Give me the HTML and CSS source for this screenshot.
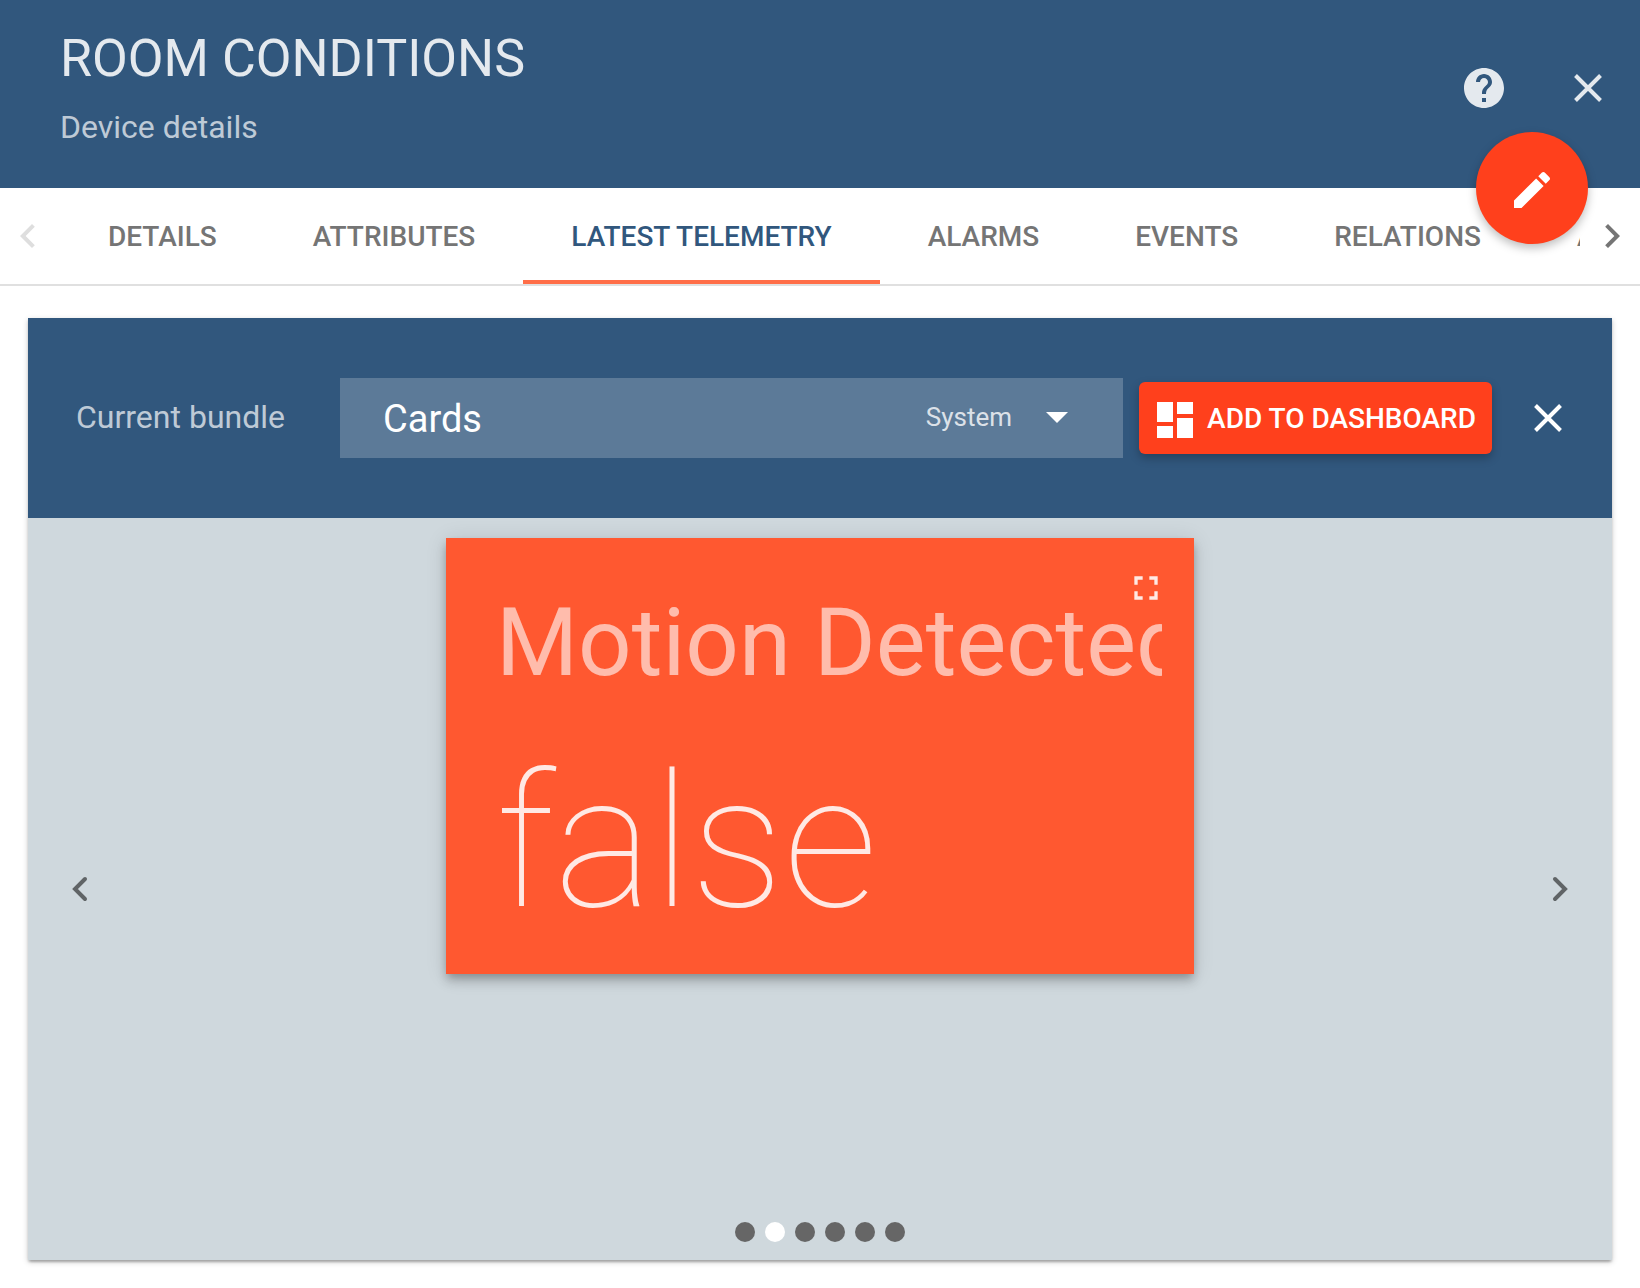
FILE: index.html
```html
<!DOCTYPE html>
<html lang="en">
<head>
<meta charset="utf-8">
<title>Room Conditions - Device details</title>
<link rel="stylesheet" href="styles.css">
</head>
<body>
<header class="header">
  <div class="header-titles">
    <h1 class="title">ROOM CONDITIONS</h1>
    <p class="subtitle">Device details</p>
  </div>
  <div class="header-actions">
    <button class="icon-button" type="button" aria-label="Help">
      <svg class="icon" viewBox="0 0 24 24"><path d="M12 2C6.480 2 2 6.480 2 12s4.480 10 10 10 10-4.480 10-10S17.520 2 12 2zm1 17h-2v-2h2v2zm2.070-7.750l-.9.920C13.450 12.900 13 13.500 13 15h-2v-.5c0-1.100.450-2.100 1.170-2.830l1.240-1.260c.370-.360.590-.860.590-1.410 0-1.100-.9-2-2-2s-2 .9-2 2H8c0-2.210 1.790-4 4-4s4 1.790 4 4c0 .880-.360 1.680-.930 2.250z"/></svg>
    </button>
    <button class="icon-button" type="button" aria-label="Close details">
      <svg class="icon icon-line" viewBox="0 0 48 48"><path d="M11.500 11.500L36.500 36.500M36.500 11.500L11.500 36.500"/></svg>
    </button>
  </div>
  <button class="fab" type="button" aria-label="Edit device">
    <svg class="icon" viewBox="0 0 24 24"><path d="M3 17.250V21h3.750L17.810 9.940l-3.750-3.750L3 17.250zM20.710 7.040c.390-.390.390-1.020 0-1.410l-2.340-2.340c-.390-.390-1.020-.390-1.410 0l-1.830 1.830 3.750 3.750 1.830-1.830z"/></svg>
  </button>
</header>

<nav class="tab-bar">
  <button class="tab-scroll tab-scroll-prev" type="button" aria-label="Previous tabs" disabled>
    <svg class="icon" viewBox="0 0 24 24"><path d="M15.410 7.410L14 6l-6 6 6 6 1.410-1.410L10.830 12z"/></svg>
  </button>
  <div class="tabs" role="tablist">
    <button class="tab" type="button" role="tab">DETAILS</button>
    <button class="tab" type="button" role="tab">ATTRIBUTES</button>
    <button class="tab tab-active" type="button" role="tab" aria-selected="true">LATEST TELEMETRY</button>
    <button class="tab" type="button" role="tab">ALARMS</button>
    <button class="tab" type="button" role="tab">EVENTS</button>
    <button class="tab" type="button" role="tab">RELATIONS</button>
    <button class="tab" type="button" role="tab">AUDIT LOGS</button>
  </div>
  <button class="tab-scroll tab-scroll-next" type="button" aria-label="Next tabs">
    <svg class="icon" viewBox="0 0 24 24"><path d="M10 6L8.590 7.410 13.170 12l-4.580 4.590L10 18l6-6z"/></svg>
  </button>
</nav>

<main class="content">
  <section class="panel">
    <div class="toolbar">
      <label class="bundle-label" for="bundle">Current bundle</label>
      <div class="bundle">
        <select class="bundle-select" id="bundle"><option>Cards</option></select>
        <span class="bundle-info">
          <span class="bundle-scope">System</span>
          <svg class="bundle-arrow" viewBox="0 0 22 11"><path d="M0 0h22L11 11z"/></svg>
        </span>
      </div>
      <button class="add-button" type="button">
        <svg class="icon add-icon" viewBox="0 0 24 24"><path d="M3 13h8V3H3v10zm0 8h8v-6H3v6zm10 0h8V11h-8v10zm0-18v6h8V3h-8z"/></svg>
        ADD TO DASHBOARD
      </button>
      <button class="icon-button toolbar-close" type="button" aria-label="Close widgets">
        <svg class="icon icon-line" viewBox="0 0 48 48"><path d="M11.500 11.500L36.500 36.500M36.500 11.500L11.500 36.500"/></svg>
      </button>
    </div>

    <div class="carousel">
      <button class="carousel-arrow" type="button" aria-label="Previous widget">
        <svg class="icon icon-chevron" viewBox="0 0 48 48"><path d="M29 14L19 24L29 34"/></svg>
      </button>
      <article class="card">
        <h2 class="card-label">Motion Detected</h2>
        <p class="card-value">false</p>
        <button class="card-expand" type="button" aria-label="Full screen">
          <svg class="icon-small" viewBox="0 0 24 24"><path d="M7 14H5v5h5v-2H7v-3zm-2-4h2V7h3V5H5v5zm12 7h-3v2h5v-5h-2v3zM14 5v2h3v3h2V5h-5z"/></svg>
        </button>
      </article>
      <button class="carousel-arrow" type="button" aria-label="Next widget">
        <svg class="icon icon-chevron" viewBox="0 0 48 48"><path d="M19 14L29 24L19 34"/></svg>
      </button>
      <div class="dots">
        <button class="dot" type="button" aria-label="Slide 1"></button>
        <button class="dot dot-active" type="button" aria-label="Slide 2"></button>
        <button class="dot" type="button" aria-label="Slide 3"></button>
        <button class="dot" type="button" aria-label="Slide 4"></button>
        <button class="dot" type="button" aria-label="Slide 5"></button>
        <button class="dot" type="button" aria-label="Slide 6"></button>
      </div>
    </div>
  </section>
</main>
</body>
</html>
```
FILE: styles.css
```css
:root {
  --primary: #31577d;
  --accent: #ff401c;
}

* { box-sizing: border-box; }

body {
  margin: 0;
  min-height: 100vh;
  display: flex;
  flex-direction: column;
  background: #fff;
  font-family: Roboto, "Liberation Sans", sans-serif;
}

h1, h2, p { margin: 0; font-weight: 400; }

button {
  flex: none;
  margin: 0;
  padding: 0;
  border: 0;
  background: none;
  color: inherit;
  font: inherit;
  cursor: pointer;
}

svg { display: block; fill: currentColor; }
.icon { width: 48px; height: 48px; flex: none; }
.icon-small { width: 40px; height: 40px; }
.icon-line { fill: none; stroke: currentColor; stroke-width: 4; }

/* Header */
.header {
  position: relative;
  display: flex;
  justify-content: space-between;
  height: 188px;
  padding: 28px 28px 0 60px;
  background: var(--primary);
  color: rgba(255, 255, 255, 0.87);
}

.title { font-size: 52px; line-height: 62px; }
.subtitle {
  margin-top: 18px;
  font-size: 32px;
  line-height: 38px;
  color: rgba(255, 255, 255, 0.7);
}

.header-actions { display: flex; gap: 56px; padding-top: 36px; height: 84px; }
.icon-button { width: 48px; height: 48px; }

.fab {
  position: absolute;
  right: 52px;
  bottom: -56px;
  z-index: 2;
  width: 112px;
  height: 112px;
  padding: 4px 32px 0;
  border-radius: 50%;
  background: var(--accent);
  color: #fff;
  box-shadow: 0 4px 10px rgba(0, 0, 0, 0.26);
}

/* Tabs */
.tab-bar {
  display: flex;
  height: 98px;
  border-bottom: 2px solid #e0e0e0;
  color: #757575;
}

.tab-scroll { width: 60px; }
.tab-scroll-prev { padding-left: 4px; color: #dedede; }
.tab-scroll-next { padding-left: 8px; }

.tabs { flex: 1; min-width: 0; display: flex; overflow: hidden; }
.tab {
  padding: 0 48px;
  font-size: 28px;
  font-weight: 500;
  white-space: nowrap;
}
.tab-active { color: var(--primary); box-shadow: inset 0 -4px #ff6e48; }

/* Widget panel */
.content { flex: 1; display: flex; padding: 32px 28px 28px; }

.panel {
  flex: 1;
  min-width: 0;
  display: flex;
  flex-direction: column;
  background: #cfd8dd;
  box-shadow: 0 2px 6px rgba(0, 0, 0, 0.2), 0 2px 2px rgba(0, 0, 0, 0.14), 0 4px 2px -2px rgba(0, 0, 0, 0.12);
}

.toolbar {
  display: flex;
  align-items: center;
  height: 200px;
  padding: 0 40px 0 48px;
  background: var(--primary);
  color: #fff;
}

.bundle-label {
  width: 264px;
  padding-bottom: 2px;
  font-size: 32px;
  line-height: 38px;
  color: rgba(255, 255, 255, 0.7);
}

.bundle { flex: 1; min-width: 0; display: grid; height: 80px; background: rgba(255, 255, 255, 0.21); }
.bundle-select {
  grid-area: 1 / 1;
  appearance: none;
  width: 100%;
  padding: 2px 220px 0 43px;
  border: 0;
  background: none;
  color: #fff;
  font: 38px Roboto, "Liberation Sans", sans-serif;
}
.bundle-info {
  grid-area: 1 / 1;
  justify-self: end;
  display: flex;
  align-items: center;
  gap: 34px;
  padding: 0 55px 2px 0;
  pointer-events: none;
}
.bundle-scope { font-size: 26px; color: rgba(255, 255, 255, 0.8); }
.bundle-arrow { width: 22px; height: 11px; }

.add-button {
  display: flex;
  align-items: center;
  gap: 8px;
  height: 72px;
  margin: 0 32px 0 16px;
  padding: 0 16px 0 12px;
  border-radius: 6px;
  background: var(--accent);
  font-size: 28px;
  font-weight: 500;
  box-shadow: 0 4px 10px rgba(0, 0, 0, 0.26);
}
.add-icon { margin-top: 4px; }

/* Carousel */
.carousel {
  flex: 1;
  display: grid;
  grid-template-columns: 48px minmax(0, 1fr) 48px;
  grid-template-rows: 1fr auto;
  padding: 20px 28px 18px;
}

.carousel-arrow { grid-row: 1 / 3; align-self: center; padding-bottom: 2px; color: #606466; }
.icon-chevron { fill: none; stroke: currentColor; stroke-width: 4; stroke-linecap: round; }

.card {
  position: relative;
  align-self: start;
  justify-self: center;
  width: 748px;
  max-width: 100%;
  height: 436px;
  padding: 50px 32px 0 50px;
  background: #ff5830;
  color: rgba(255, 255, 255, 0.87);
  box-shadow: 0 4px 8px -2px rgba(0, 0, 0, 0.2), 0 8px 10px rgba(0, 0, 0, 0.14), 0 2px 20px rgba(0, 0, 0, 0.12);
}

.card-label {
  overflow: hidden;
  color: rgba(255, 255, 255, 0.6);
  font-size: 94px;
  line-height: 110px;
  white-space: nowrap;
}
.card-value {
  margin-top: 35px;
  font-size: 186px;
  font-weight: 100;
  line-height: 218px;
}
.card-expand { position: absolute; top: 30px; right: 28px; }

.dots { grid-area: 2 / 2; display: flex; justify-content: center; gap: 10px; }
.dot { width: 20px; height: 20px; border-radius: 50%; background: #666; }
.dot-active { background: #fff; }
```
